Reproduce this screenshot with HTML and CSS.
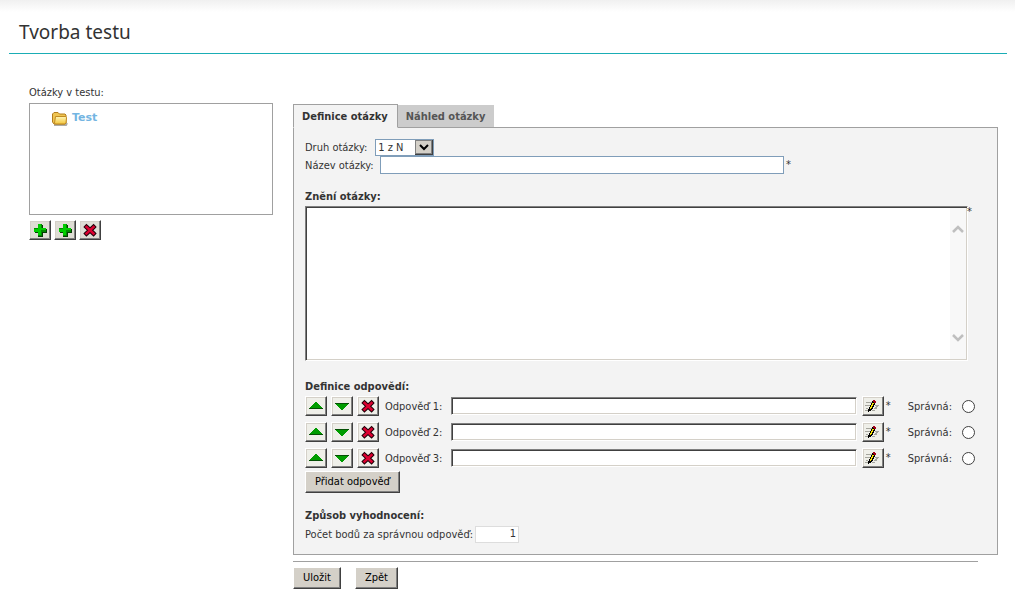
FILE: index.html
```html
<!DOCTYPE html>
<html lang="cs">
<head>
<meta charset="utf-8">
<title>Tvorba testu</title>
<link rel="stylesheet" href="styles.css">
</head>
<body>
<svg class="sprite" aria-hidden="true">
  <defs>
    <linearGradient id="gold" x1="0" y1="0" x2="0" y2="1"><stop offset="0" stop-color="#fff6b8"/><stop offset="1" stop-color="#f3c63c"/></linearGradient>
    <symbol id="plus" viewBox="0 0 14 14"><path d="M5 2h5v4h4v4h-4v4H5v-4H2V6h3z" fill="#053c05"/><path d="M5 1h4v4h4v4H9v4H5V9H1V5h4z" fill="#008a00"/><path d="M5 1h3v4h5v2H8v5H5V9H1V6h4z" fill="#0c0"/></symbol>
    <symbol id="cross" viewBox="0 0 14 14"><g fill="none" shape-rendering="auto"><path d="M3.500 4l7 6.500M10.500 4l-7 6.500" stroke="#200008" stroke-width="4.500" stroke-linecap="square"/><path d="M3.500 4l7 6.500M10.500 4l-7 6.500" stroke="#dc0030" stroke-width="2.500" stroke-linecap="square"/></g></symbol>
    <symbol id="up" viewBox="0 0 14 14"><path d="M6 3h2v1h1v1h1v1h1v1h1v1h1v1h1v1H0V9h1V8h1V7h1V6h1V5h1V4h1z" fill="#009c00"/><path d="M0 9h14v1H0z" fill="#045004"/></symbol>
    <symbol id="down" viewBox="0 0 14 14"><path d="M0 4h14v1h-1v1h-1v1h-1v1h-1v1H9v1H8v1H6v-1H5V9H4V8H3V7H2V6H1V5H0z" fill="#009c00"/><path d="M0 4h14v1H0z" fill="#045004"/></symbol>
    <symbol id="pencil" viewBox="0 0 14 14"><path d="M1 3h6v1H1zM0 6h5v1H0zM10 6h4v1h-4zM1 9h2v1H1zM9 9h3v1H9zM0 11h3v1H0zM7 11h3v1H7zM11 7h2v1h-2zM10 8h2v1h-2z" fill="#a5a59d"/><path d="M8 1h2v1h1v2h-1v2H9v2H8v2H7v1H6v1H4v1H3v-3h1V8h1V6h1V4h1V2h1z" fill="#000"/><path d="M7 4h2v1H8v2H7v2H6v1H5V8h1V6h1z" fill="#ffe800"/><path d="M8 1h2v1h1v2H9V3H8z" fill="#a3001a"/></symbol>
  </defs>
</svg>
<header class="page-header"><h1>Tvorba testu</h1></header>
<div class="layout">
  <aside class="sidebar">
    <h2 class="caption">Otázky v testu:</h2>
    <div class="tree">
      <a class="tree-item" href="#test">
        <svg class="folder" viewBox="0 0 17 15"><path d="M3 14h12l1-2" fill="none" stroke="#77736a" stroke-opacity=".6" stroke-width="2"/><path d="M1.500 11V3L3 1.500h4L8.500 3H14l1 1v8l-1 1H3z" fill="#efc451" stroke="#b27c1d"/><path d="M4.500 5.500H14q1.500 0 1.500 1L15 12l-1 1H4.500L3.500 12z" fill="url(#gold)" stroke="#c18b22"/></svg>
        <span>Test</span>
      </a>
    </div>
    <div class="tools">
      <button class="icon-btn" type="button" aria-label="Přidat otázku"><svg><use href="#plus"/></svg></button>
      <button class="icon-btn" type="button" aria-label="Přidat skupinu"><svg><use href="#plus"/></svg></button>
      <button class="icon-btn" type="button" aria-label="Odstranit"><svg><use href="#cross"/></svg></button>
    </div>
  </aside>
  <main class="editor">
    <div class="tabs" role="tablist">
      <button class="tab active" type="button" role="tab" aria-selected="true">Definice otázky</button>
      <button class="tab" type="button" role="tab" aria-selected="false">Náhled otázky</button>
    </div>
    <form class="panel" id="question">
      <div class="row">
        <label for="kind">Druh otázky:</label>
        <span class="select-box">
          <select id="kind"><option>1 z N</option></select>
          <svg class="select-arrow" viewBox="0 0 18 15" aria-hidden="true"><path d="M0 0h18v15H0z" fill="#404040"/><path d="M0 0h17v14H0z" fill="#808080"/><path d="M1 1h15v12H1z" fill="#d4d0c8"/><path d="M5 5l4 4 4-4" fill="none" stroke="#000" stroke-width="2"/></svg>
        </span>
      </div>
      <div class="row name-row">
        <label for="name">Název otázky:</label>
        <input class="line-input" id="name" type="text"><span class="required">*</span>
      </div>
      <label class="section" for="wording">Znění otázky:</label>
      <div class="wording">
        <div class="area-box">
          <textarea id="wording"></textarea>
          <div class="scroll" aria-hidden="true">
            <svg viewBox="0 0 12 8"><path d="M1 7l5-5 5 5" fill="none" stroke="#bfbfbf" stroke-width="2.500"/></svg>
            <svg viewBox="0 0 12 8"><path d="M1 1l5 5 5-5" fill="none" stroke="#bfbfbf" stroke-width="2.500"/></svg>
          </div>
          <span class="required area-required">*</span>
        </div>
      </div>
      <h2 class="section">Definice odpovědí:</h2>
      <div class="answer">
        <button class="icon-btn light" type="button" aria-label="Nahoru"><svg><use href="#up"/></svg></button>
        <button class="icon-btn light" type="button" aria-label="Dolů"><svg><use href="#down"/></svg></button>
        <button class="icon-btn light" type="button" aria-label="Odstranit"><svg><use href="#cross"/></svg></button>
        <label class="answer-label" for="a1">Odpověď 1:</label>
        <input class="sunken" id="a1" type="text">
        <button class="icon-btn light" type="button" aria-label="Upravit"><svg><use href="#pencil"/></svg></button>
        <span class="required">*</span>
        <label class="correct" for="c1">Správná:</label><input id="c1" type="radio" name="correct">
      </div>
      <div class="answer">
        <button class="icon-btn light" type="button" aria-label="Nahoru"><svg><use href="#up"/></svg></button>
        <button class="icon-btn light" type="button" aria-label="Dolů"><svg><use href="#down"/></svg></button>
        <button class="icon-btn light" type="button" aria-label="Odstranit"><svg><use href="#cross"/></svg></button>
        <label class="answer-label" for="a2">Odpověď 2:</label>
        <input class="sunken" id="a2" type="text">
        <button class="icon-btn light" type="button" aria-label="Upravit"><svg><use href="#pencil"/></svg></button>
        <span class="required">*</span>
        <label class="correct" for="c2">Správná:</label><input id="c2" type="radio" name="correct">
      </div>
      <div class="answer">
        <button class="icon-btn light" type="button" aria-label="Nahoru"><svg><use href="#up"/></svg></button>
        <button class="icon-btn light" type="button" aria-label="Dolů"><svg><use href="#down"/></svg></button>
        <button class="icon-btn light" type="button" aria-label="Odstranit"><svg><use href="#cross"/></svg></button>
        <label class="answer-label" for="a3">Odpověď 3:</label>
        <input class="sunken" id="a3" type="text">
        <button class="icon-btn light" type="button" aria-label="Upravit"><svg><use href="#pencil"/></svg></button>
        <span class="required">*</span>
        <label class="correct" for="c3">Správná:</label><input id="c3" type="radio" name="correct">
      </div>
      <button class="btn" type="button">Přidat odpověď</button>
      <h2 class="section scoring">Způsob vyhodnocení:</h2>
      <div class="row">
        <label for="points">Počet bodů za správnou odpověď:</label>
        <input class="points" id="points" type="text" value="1">
      </div>
    </form>
    <div class="actions">
      <button class="btn" type="submit" form="question">Uložit</button>
      <button class="btn" type="button">Zpět</button>
    </div>
  </main>
</div>
</body>
</html>
```
FILE: styles.css
```css
* { box-sizing: border-box; }
body {
  margin: 0;
  padding: 0 8px 0 9px;
  background: #fff linear-gradient(#f0f0f0, #fff) 0 0 / 100% 12px no-repeat;
  color: #333;
  font: 11px/18px "DejaVu Sans Condensed", "DejaVu Sans", sans-serif;
}
button, input, select, textarea { margin: 0; font: inherit; color: inherit; border-radius: 0; }
h1, h2 { margin: 0; }
.sprite { position: absolute; width: 0; height: 0; }
.page-header { padding: 17px 10px 6px; border-bottom: 1px solid #1aadb5; }
.page-header h1 { font: 19px/30px "Noto Sans", sans-serif; }
.layout { display: flex; align-items: flex-start; gap: 20px; padding: 29px 9px 0 20px; }
.sidebar { flex: 0 0 244px; }
.caption { font-weight: normal; font-size: 11px; line-height: 20px; }
.tree { height: 112px; padding: 5px 21px; border: 1px solid #a0a0a0; }
.tree-item {
  display: inline-flex; align-items: center; gap: 4px;
  color: #74b5e2; font: bold 11px/16px "DejaVu Sans", sans-serif; text-decoration: none;
}
.folder { width: 17px; height: 15px; margin-top: 2px; }
.tools { display: flex; gap: 3px; padding-top: 5px; }
.icon-btn {
  display: flex; align-items: center; justify-content: center;
  width: 22px; height: 20px; padding: 0 1px 0 0; flex: none;
  background: #dfddd5;
  border: 1px solid; border-color: #fff #404040 #404040 #fff;
  box-shadow: inset -1px -1px #808080, inset 1px 1px #d4d0c8;
}
.icon-btn.light { background: #efefe9; }
.icon-btn svg { width: 14px; height: 14px; shape-rendering: crispEdges; }
.editor { flex: 1; min-width: 0; padding-top: 21px; }
.tabs { display: flex; align-items: flex-end; margin-bottom: -1px; position: relative; }
.tab {
  height: 23px; padding: 2px 9px 0 8px; border: 0; background: #ccc; color: #555;
  font-weight: bold; font-size: 11px; border-bottom: 1px solid #a0a0a0;
}
.tab.active { height: 24px; background: #f3f3f3; color: #333; border: 1px solid #a0a0a0; border-bottom-color: #f3f3f3; }
.panel { padding: 10px 20px 11px 11px; background: #f3f3f3; border: 1px solid #a0a0a0; }
.row { display: flex; align-items: center; gap: 8px; height: 18px; }
.row label, .answer label { padding-top: 2px; }
.select-box { display: flex; position: relative; width: 59px; height: 17px; }
.select-box select { appearance: none; width: 100%; padding: 0 2px; border: 1px solid #7f9db9; background: #fff; line-height: 15px; }
.select-arrow { position: absolute; right: 1px; top: 1px; width: 18px; height: 15px; pointer-events: none; }
.line-input { flex: 1; min-width: 0; height: 18px; border: 1px solid #7f9db9; background: #fff; }
.name-row { padding-right: 186px; gap: 6px; }
.name-row .required { margin-left: -4px; }
.required { font-size: 11px; }
.section { display: block; font-size: 11px; line-height: 18px; font-weight: bold; }
label.section { margin-top: 14px; }
.wording { padding: 0 9px 17px 0; }
.area-box { position: relative; }
textarea {
  display: block; width: 100%; height: 155px; resize: none; padding: 2px 20px 2px 4px; background: #fff;
  border: 1px solid; border-color: #808080 #fff #fff #808080;
  box-shadow: inset 1px 1px #404040, inset -1px -1px #d4d0c8;
}
.scroll {
  position: absolute; right: 2px; top: 2px; bottom: 2px; width: 16px; padding: 17px 2px;
  display: flex; flex-direction: column; justify-content: space-between; background: #f8f8f8;
}
.scroll svg { width: 12px; height: 8px; }
.area-required { position: absolute; right: -4px; top: -3px; }
.answer { display: flex; align-items: center; height: 20px; margin-bottom: 6px; gap: 4px; }
.answer-label { width: 64px; padding-left: 2px; white-space: nowrap; }
.sunken {
  flex: 1; min-width: 0; height: 18px; margin-right: 1px; background: #fff;
  border: 1px solid; border-color: #808080 #fff #fff #808080;
  box-shadow: inset 1px 1px #404040, inset -1px -1px #d4d0c8;
}
.answer .required { margin-left: -2px; }
.correct { margin-left: 13px; }
.answer input[type="radio"] {
  appearance: none; width: 13px; height: 13px; margin: 0 2px 0 6px;
  border: 1px solid #404040; border-radius: 50%; background: #fff;
}
.answer input[type="radio"]:checked { background: radial-gradient(#222 3px, #fff 4px); }
.answer + .btn { margin-top: -3px; }
.btn {
  display: block; height: 22px; padding: 0 9px; line-height: 18px; color: #000; background: #d4d0c8;
  border: 1px solid; border-color: #fff #404040 #404040 #fff;
  box-shadow: inset -1px -1px #808080;
}
.scoring { margin-top: 14px; }
.points { width: 44px; height: 17px; padding: 0 2px; border: 1px solid #ddd; background: #fff; text-align: right; }
.panel .row:last-child { gap: 2px; }
.actions { display: flex; gap: 14px; margin: 6px 20px 0 0; padding-top: 5px; border-top: 1px solid #a0a0a0; }
```
